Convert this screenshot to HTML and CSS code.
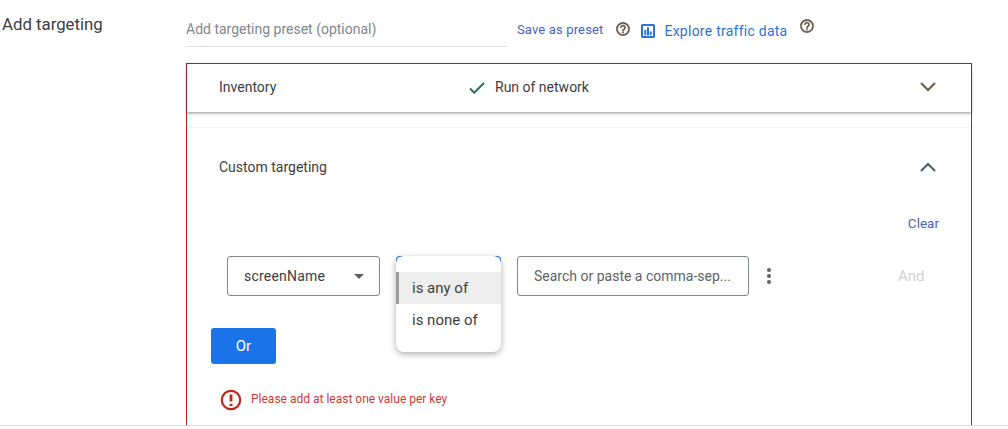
FILE: index.html
```html
<!DOCTYPE html>
<html lang="en">
<head>
    <meta charset="UTF-8">
    <title>Add targeting</title>
    <link rel="stylesheet" href="styles.css">
</head>
<body>
    <div class="page">
        <div class="section-label">Add targeting</div>
        <div class="section-body">
            <div class="preset-row">
                <div class="preset-input">Add targeting preset (optional)</div>
                <a class="save-link">Save as preset</a>
                <svg class="help-icon" viewBox="0 0 24 24"><path d="M11 18h2v-2h-2v2zm1-16C6.48 2 2 6.48 2 12s4.48 10 10 10 10-4.48 10-10S17.52 2 12 2zm0 18c-4.41 0-8-3.590-8-8s3.590-8 8-8 8 3.590 8 8-3.590 8-8 8zm0-14c-2.210 0-4 1.790-4 4h2c0-1.100.9-2 2-2s2 .9 2 2c0 2-3 1.750-3 5h2c0-2.250 3-2.500 3-5 0-2.210-1.790-4-4-4z"/></svg>
                <svg class="chart-icon" viewBox="0 0 14 14"><path fill-rule="evenodd" d="M1.500 0h11A1.500 1.500 0 0 1 14 1.500v11a1.500 1.500 0 0 1-1.500 1.500h-11A1.500 1.500 0 0 1 0 12.500v-11A1.500 1.500 0 0 1 1.500 0zM2 2v10h10V2zM3.300 6h2v5.200h-2zM6 3.200h2v8H6zM8.700 7.500h2v3.700h-2z"/></svg>
                <a class="explore-link">Explore traffic data</a>
                <svg class="help-icon help-raised" viewBox="0 0 24 24"><path d="M11 18h2v-2h-2v2zm1-16C6.48 2 2 6.48 2 12s4.48 10 10 10 10-4.48 10-10S17.52 2 12 2zm0 18c-4.41 0-8-3.590-8-8s3.590-8 8-8 8 3.590 8 8-3.590 8-8 8zm0-14c-2.210 0-4 1.790-4 4h2c0-1.100.9-2 2-2s2 .9 2 2c0 2-3 1.750-3 5h2c0-2.250 3-2.500 3-5 0-2.210-1.790-4-4-4z"/></svg>
            </div>

            <div class="targeting-box">
                <div class="panel-collapsed">
                    <span class="panel-title">Inventory</span>
                    <span class="panel-summary">
                        <svg class="check-icon" viewBox="0 0 16 12"><path d="M1 6.500l4.200 4.200L15 1"/></svg>
                        Run of network
                    </span>
                    <svg class="chevron chevron-brown" viewBox="0 0 16 10"><path d="M1 1l7 7 7-7"/></svg>
                </div>

                <div class="panel-open">
                    <div class="panel-header">
                        <span class="panel-title">Custom targeting</span>
                        <svg class="chevron" viewBox="0 0 16 10"><path d="M1 9l7-7 7 7"/></svg>
                    </div>
                    <div class="clear-row"><a class="clear-link">Clear</a></div>

                    <div class="rule-row">
                        <div class="key-select">
                            <span>screenName</span>
                            <span class="select-arrow"></span>
                        </div>
                        <div class="operator-select">
                            <ul class="operator-menu">
                                <li class="operator-option selected">is any of</li>
                                <li class="operator-option">is none of</li>
                            </ul>
                        </div>
                        <div class="value-input">Search or paste a comma-sep...</div>
                        <span class="more-dots"><i></i><i></i><i></i></span>
                        <span class="and-button">And</span>
                    </div>

                    <button class="or-button">Or</button>

                    <div class="error-row">
                        <svg class="error-icon" viewBox="0 0 22 22"><circle cx="11" cy="11" r="9.200"/><path class="error-mark" d="M11 5.500v7M11 14.800v2.200"/></svg>
                        <span class="error-text">Please add at least one value per key</span>
                    </div>
                </div>
            </div>
        </div>
    </div>
</body>
</html>
```

FILE: styles.css
```css
html, body {
    margin: 0;
    height: 429px;
    overflow: hidden;
    background: #fff;
}

body {
    font-family: Roboto, "Liberation Sans", sans-serif;
    color: #3c4043;
}

.page {
    display: flex;
    height: 425px;
    border-bottom: 1px solid #dadce0;
    overflow: hidden;
}

.section-label {
    width: 184px;
    margin-left: 2px;
    padding-top: 14px;
    font-size: 16.8px;
    line-height: 20px;
    color: #3c4043;
    flex: none;
}

.section-body {
    width: 786px;
    flex: none;
}

/* Preset row */
.preset-row {
    display: flex;
    align-items: center;
    height: 63px;
}

.preset-input {
    width: 321px;
    height: 33px;
    margin-top: -3px;
    border-bottom: 1px solid #e0e0e0;
    font-size: 14px;
    line-height: 33px;
    color: #80868b;
    flex: none;
}

.save-link {
    margin: -5px 0 0 10px;
    font-size: 13px;
    letter-spacing: 0.15px;
    color: #4c61c4;
}

.help-icon {
    width: 16px;
    height: 16px;
    margin: -5px 0 0 12px;
    fill: #5f5147;
    stroke: #5f5147;
    stroke-width: 0.6;
    flex: none;
}

.help-raised {
    margin: -11px 0 0 12px;
}

.chart-icon {
    width: 14px;
    height: 14px;
    margin: -1px 0 0 10px;
    fill: #2a75d8;
    flex: none;
}

.explore-link {
    margin: -1px 0 0 9px;
    font-size: 14px;
    letter-spacing: 0.25px;
    color: #2a75d8;
}

/* Red outlined box */
.targeting-box {
    height: 362px;
    border: 1px solid #b71c1c;
    border-bottom: 0;
}

.panel-collapsed {
    position: relative;
    display: flex;
    align-items: center;
    box-sizing: border-box;
    height: 48px;
    padding: 0 32px 2px;
    background: #fff;
    box-shadow: 0 1px 3px rgba(60, 64, 67, 0.6);
}

.panel-title {
    font-size: 14px;
    color: #3c4043;
}

.panel-summary {
    display: flex;
    align-items: center;
    gap: 10px;
    position: absolute;
    left: 282px;
    font-size: 14px;
    color: #3c4043;
}

.check-icon {
    width: 16px;
    height: 12px;
    margin-top: 2px;
    fill: none;
    stroke: #1e7145;
    stroke-width: 1.8;
}

.chevron {
    width: 16px;
    height: 10px;
    margin-left: auto;
    margin-right: 3px;
    fill: none;
    stroke: #4f5b66;
    stroke-width: 2;
}

.chevron-brown {
    stroke: #6b5c45;
}

.panel-open {
    position: relative;
    margin-top: 15px;
    border-top: 1px solid #f1f3f4;
    padding: 0 32px;
}

.panel-header {
    display: flex;
    align-items: center;
    height: 20px;
    padding-top: 29px;
}

.clear-row {
    display: flex;
    justify-content: flex-end;
    margin: 38px 0 0 0;
    line-height: 16px;
}

.clear-link {
    font-size: 13.5px;
    color: #4c61c4;
}

.rule-row {
    display: flex;
    align-items: center;
    height: 40px;
    margin: 25px 0 0 8px;
}

.key-select {
    display: flex;
    align-items: center;
    justify-content: space-between;
    box-sizing: border-box;
    width: 153px;
    height: 40px;
    padding: 0 15px 0 16px;
    border: 1px solid #80868b;
    border-radius: 3px;
    font-size: 14px;
    letter-spacing: 0.2px;
    color: #3c4043;
}

.select-arrow {
    width: 0;
    height: 0;
    border-left: 5px solid transparent;
    border-right: 5px solid transparent;
    border-top: 5px solid #5f6368;
}

.operator-select {
    position: relative;
    box-sizing: border-box;
    width: 105px;
    height: 40px;
    margin-left: 16px;
}

/* only the corners of the focused select show behind the menu */
.operator-select::before {
    content: "";
    position: absolute;
    left: 0;
    right: 0;
    top: 0;
    height: 6px;
    border: 1px solid #1a73e8;
    border-bottom: 0;
    border-radius: 4px 4px 0 0;
}

.operator-menu {
    position: absolute;
    left: 0;
    right: 0;
    top: 0;
    height: 96px;
    margin: 0;
    padding: 16px 0;
    box-sizing: border-box;
    list-style: none;
    background: #fff;
    border-radius: 8px;
    box-shadow: 0 2px 6px rgba(60, 64, 67, 0.45);
    z-index: 2;
}

.operator-option {
    height: 32px;
    padding-left: 16px;
    font-size: 15px;
    line-height: 32px;
    color: #3c4043;
}

.selected {
    background: #eeeeee;
    border-left: 3px solid #9e9e9e;
    padding-left: 13px;
}

.value-input {
    box-sizing: border-box;
    width: 232px;
    height: 40px;
    margin-left: 16px;
    padding-left: 16px;
    border: 1px solid #80868b;
    border-radius: 3px;
    font-size: 14px;
    line-height: 38px;
    color: #5f6368;
    flex: none;
}

.more-dots {
    display: flex;
    flex-direction: column;
    gap: 2px;
    margin-left: 18px;
}

.more-dots i {
    width: 4px;
    height: 4px;
    border-radius: 50%;
    background: #5f6368;
}

.and-button {
    margin-left: 127px;
    font-size: 15px;
    color: #cfd1d4;
}

.or-button {
    display: block;
    width: 65px;
    height: 36px;
    margin: 32px 0 0 -8px;
    padding: 0;
    border: 0;
    border-radius: 3px;
    background: #1a73e8;
    color: #fff;
    font-family: inherit;
    font-size: 15px;
}

.error-row {
    display: flex;
    align-items: center;
    gap: 9px;
    margin: 25px 0 0 1px;
    font-size: 12px;
    color: #cf3b37;
}

.error-text {
    margin-top: -3px;
}

.error-icon {
    width: 22px;
    height: 22px;
    fill: none;
    stroke: #c5221f;
    stroke-width: 2.2;
    flex: none;
}

.error-mark {
    stroke-width: 2.8;
}
```
